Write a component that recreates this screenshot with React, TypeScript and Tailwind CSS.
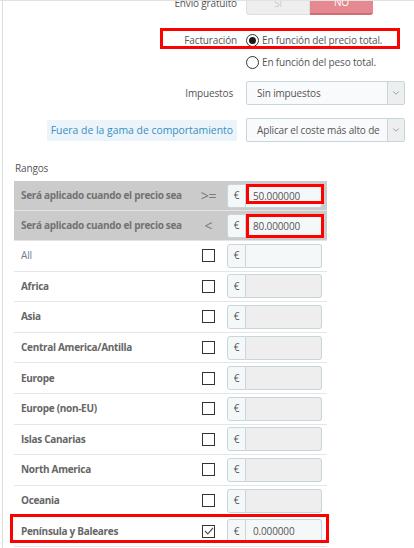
import { ChevronDown } from 'lucide-react';

type Zone = {
  name: string;
  plain?: boolean;
  checked?: boolean;
  value?: string;
  enabled?: boolean;
  marked?: boolean;
};

const zones: Zone[] = [
  { name: 'All', plain: true, enabled: true },
  { name: 'Africa' },
  { name: 'Asia' },
  { name: 'Central America/Antilla' },
  { name: 'Europe' },
  { name: 'Europe (non-EU)' },
  { name: 'Islas Canarias' },
  { name: 'North America' },
  { name: 'Oceania' },
  { name: 'Península y Baleares', checked: true, enabled: true, value: '0.000000', marked: true },
];

function Radio({ checked }: { checked?: boolean }) {
  return (
    <span className="w-[13px] h-[13px] rounded-full border border-[#333] bg-white flex items-center justify-center shrink-0">
      {checked && <span className="w-[7px] h-[7px] rounded-full bg-[#1a1a1a]" />}
    </span>
  );
}

function Select({ value }: { value: string }) {
  return (
    <div className="w-[159px] h-[24px] flex border border-[#c7d6db] bg-[#f8fafb] rounded-[2px]">
      <span className="flex-1 pl-[10px] leading-[22px] overflow-hidden whitespace-nowrap">{value}</span>
      <span className="w-[17px] border-l border-[#c7d6db] bg-[#eceeef] flex items-center justify-center text-[#666]">
        <ChevronDown size={10} strokeWidth={1.4} />
      </span>
    </div>
  );
}

function PriceInput({ value, disabled, redBox }: { value?: string; disabled?: boolean; redBox?: string }) {
  return (
    <div className="flex h-[24px] w-[95px]">
      <span className="w-[19px] flex items-center justify-center border border-[#c7d6db] rounded-l-[3px] bg-[#f5f8f9] text-[10px] text-[#555]">
        €
      </span>
      <div
        className={`relative flex-1 border border-l-0 border-[#c7d6db] rounded-r-[3px] pl-[7px] leading-[22px] text-[10px] text-[#555] ${
          disabled ? 'bg-[#eeeeee]' : 'bg-[#f5f8f9]'
        }`}
      >
        {value}
        {redBox && <span className={`absolute left-0 -right-[3px] border-[3px] border-[#ff0000] ${redBox}`} />}
      </div>
    </div>
  );
}

export default function App() {
  return (
    <div className="w-[414px] h-[548px] overflow-hidden bg-white border-t border-[#e2e2e2] font-['Open_Sans',sans-serif] text-[10px] text-[#555] tracking-[-0.15px]">
      <div className="ml-[2px] h-full border-l border-[#dcdcdc] overflow-hidden">
        {/* form */}
        <div className="-mt-[10px] flex items-center h-[24px]">
          <span className="w-[234px] text-right">Envío gratuito</span>
          <div className="ml-[9px] flex h-[24px] w-[127px]">
            <span className="w-[64px] flex items-center justify-center bg-[#eeeeee] border border-[#dedede] rounded-l-[3px] text-[#cccccc]">
              SI
            </span>
            <span className="flex-1 flex items-center justify-center bg-[#e4898f] border-b-2 border-[#cf6d74] rounded-r-[3px] text-white">
              NO
            </span>
          </div>
        </div>

        <div className="relative mt-[15px] flex items-center h-[20px]">
          <span className="w-[234px] text-right">Facturación</span>
          <label className="ml-[9px] flex items-center gap-[3px]">
            <Radio checked />
            <span>En función del precio total.</span>
          </label>
          <span className="absolute left-[157px] -top-[2px] w-[240px] h-[21px] border-[3px] border-[#ff0000]" />
        </div>

        <div className="mt-[2px] flex items-center h-[20px]">
          <span className="w-[234px]" />
          <label className="ml-[9px] flex items-center gap-[3px]">
            <Radio />
            <span>En función del peso total.</span>
          </label>
        </div>

        <div className="mt-[9px] flex items-center">
          <span className="w-[230px] text-right">Impuestos</span>
          <div className="ml-[13px]">
            <Select value="Sin impuestos" />
          </div>
        </div>

        <div className="mt-[13px] flex items-center">
          <div className="w-[234px] flex justify-end">
            <span className="bg-[#eaf4fa] text-[#3a8fc0] px-[4px] h-[21px] leading-[21px] rounded-[2px] text-[10.4px] tracking-[0px]">
              Fuera de la gama de comportamiento
            </span>
          </div>
          <div className="ml-[9px]">
            <Select value="Aplicar el coste más alto de" />
          </div>
        </div>

        <div className="mt-[19px] ml-[12px] leading-[14px]">Rangos</div>

        {/* ranges table */}
        <div className="mt-[6px] ml-[11px] w-[313px]">
          {[
            { op: '>=', value: '50.000000', box: '-top-px bottom-[3px]' },
            { op: '<', value: '80.000000', box: '-top-px -bottom-px' },
          ].map((h) => (
            <div
              key={h.op}
              className="grid grid-cols-[169px_37px_95px] items-center h-[29px] pl-[7px] pr-[5px] bg-[#cbcbcb] border-b border-[#e4e4e4] box-content"
            >
              <span className="font-bold text-[#727272] whitespace-nowrap tracking-[-0.3px]">
                Será aplicado cuando el precio sea
              </span>
              <span className="text-center text-[14px] text-[#7a7a7a]">{h.op}</span>
              <PriceInput value={h.value} redBox={h.box} />
            </div>
          ))}

          {zones.map((z) => (
            <div
              key={z.name}
              className="relative grid grid-cols-[169px_37px_95px] items-center h-[29.6px] pl-[7px] pr-[5px] border-b border-[#e3e7ea] box-content"
            >
              <span className={z.plain ? 'text-[#707d8c]' : 'font-bold text-[#666] tracking-[-0.3px]'}>{z.name}</span>
              <span className="flex justify-center">
                <span className="w-[13px] h-[13px] border-[1.5px] border-[#333] bg-white flex items-center justify-center">
                  {z.checked && (
                    <svg width="10" height="8" viewBox="0 0 10 8" fill="none">
                      <path d="M1 4 L3.8 6.8 L9 1" stroke="#555" strokeWidth="1.2" />
                    </svg>
                  )}
                </span>
              </span>
              <PriceInput value={z.value} disabled={!z.enabled} />
              {z.marked && (
                <span className="absolute -left-[4px] -right-[2px] -top-[2px] bottom-[3px] border-[3px] border-[#ff0000]" />
              )}
            </div>
          ))}
        </div>
      </div>
    </div>
  );
}
